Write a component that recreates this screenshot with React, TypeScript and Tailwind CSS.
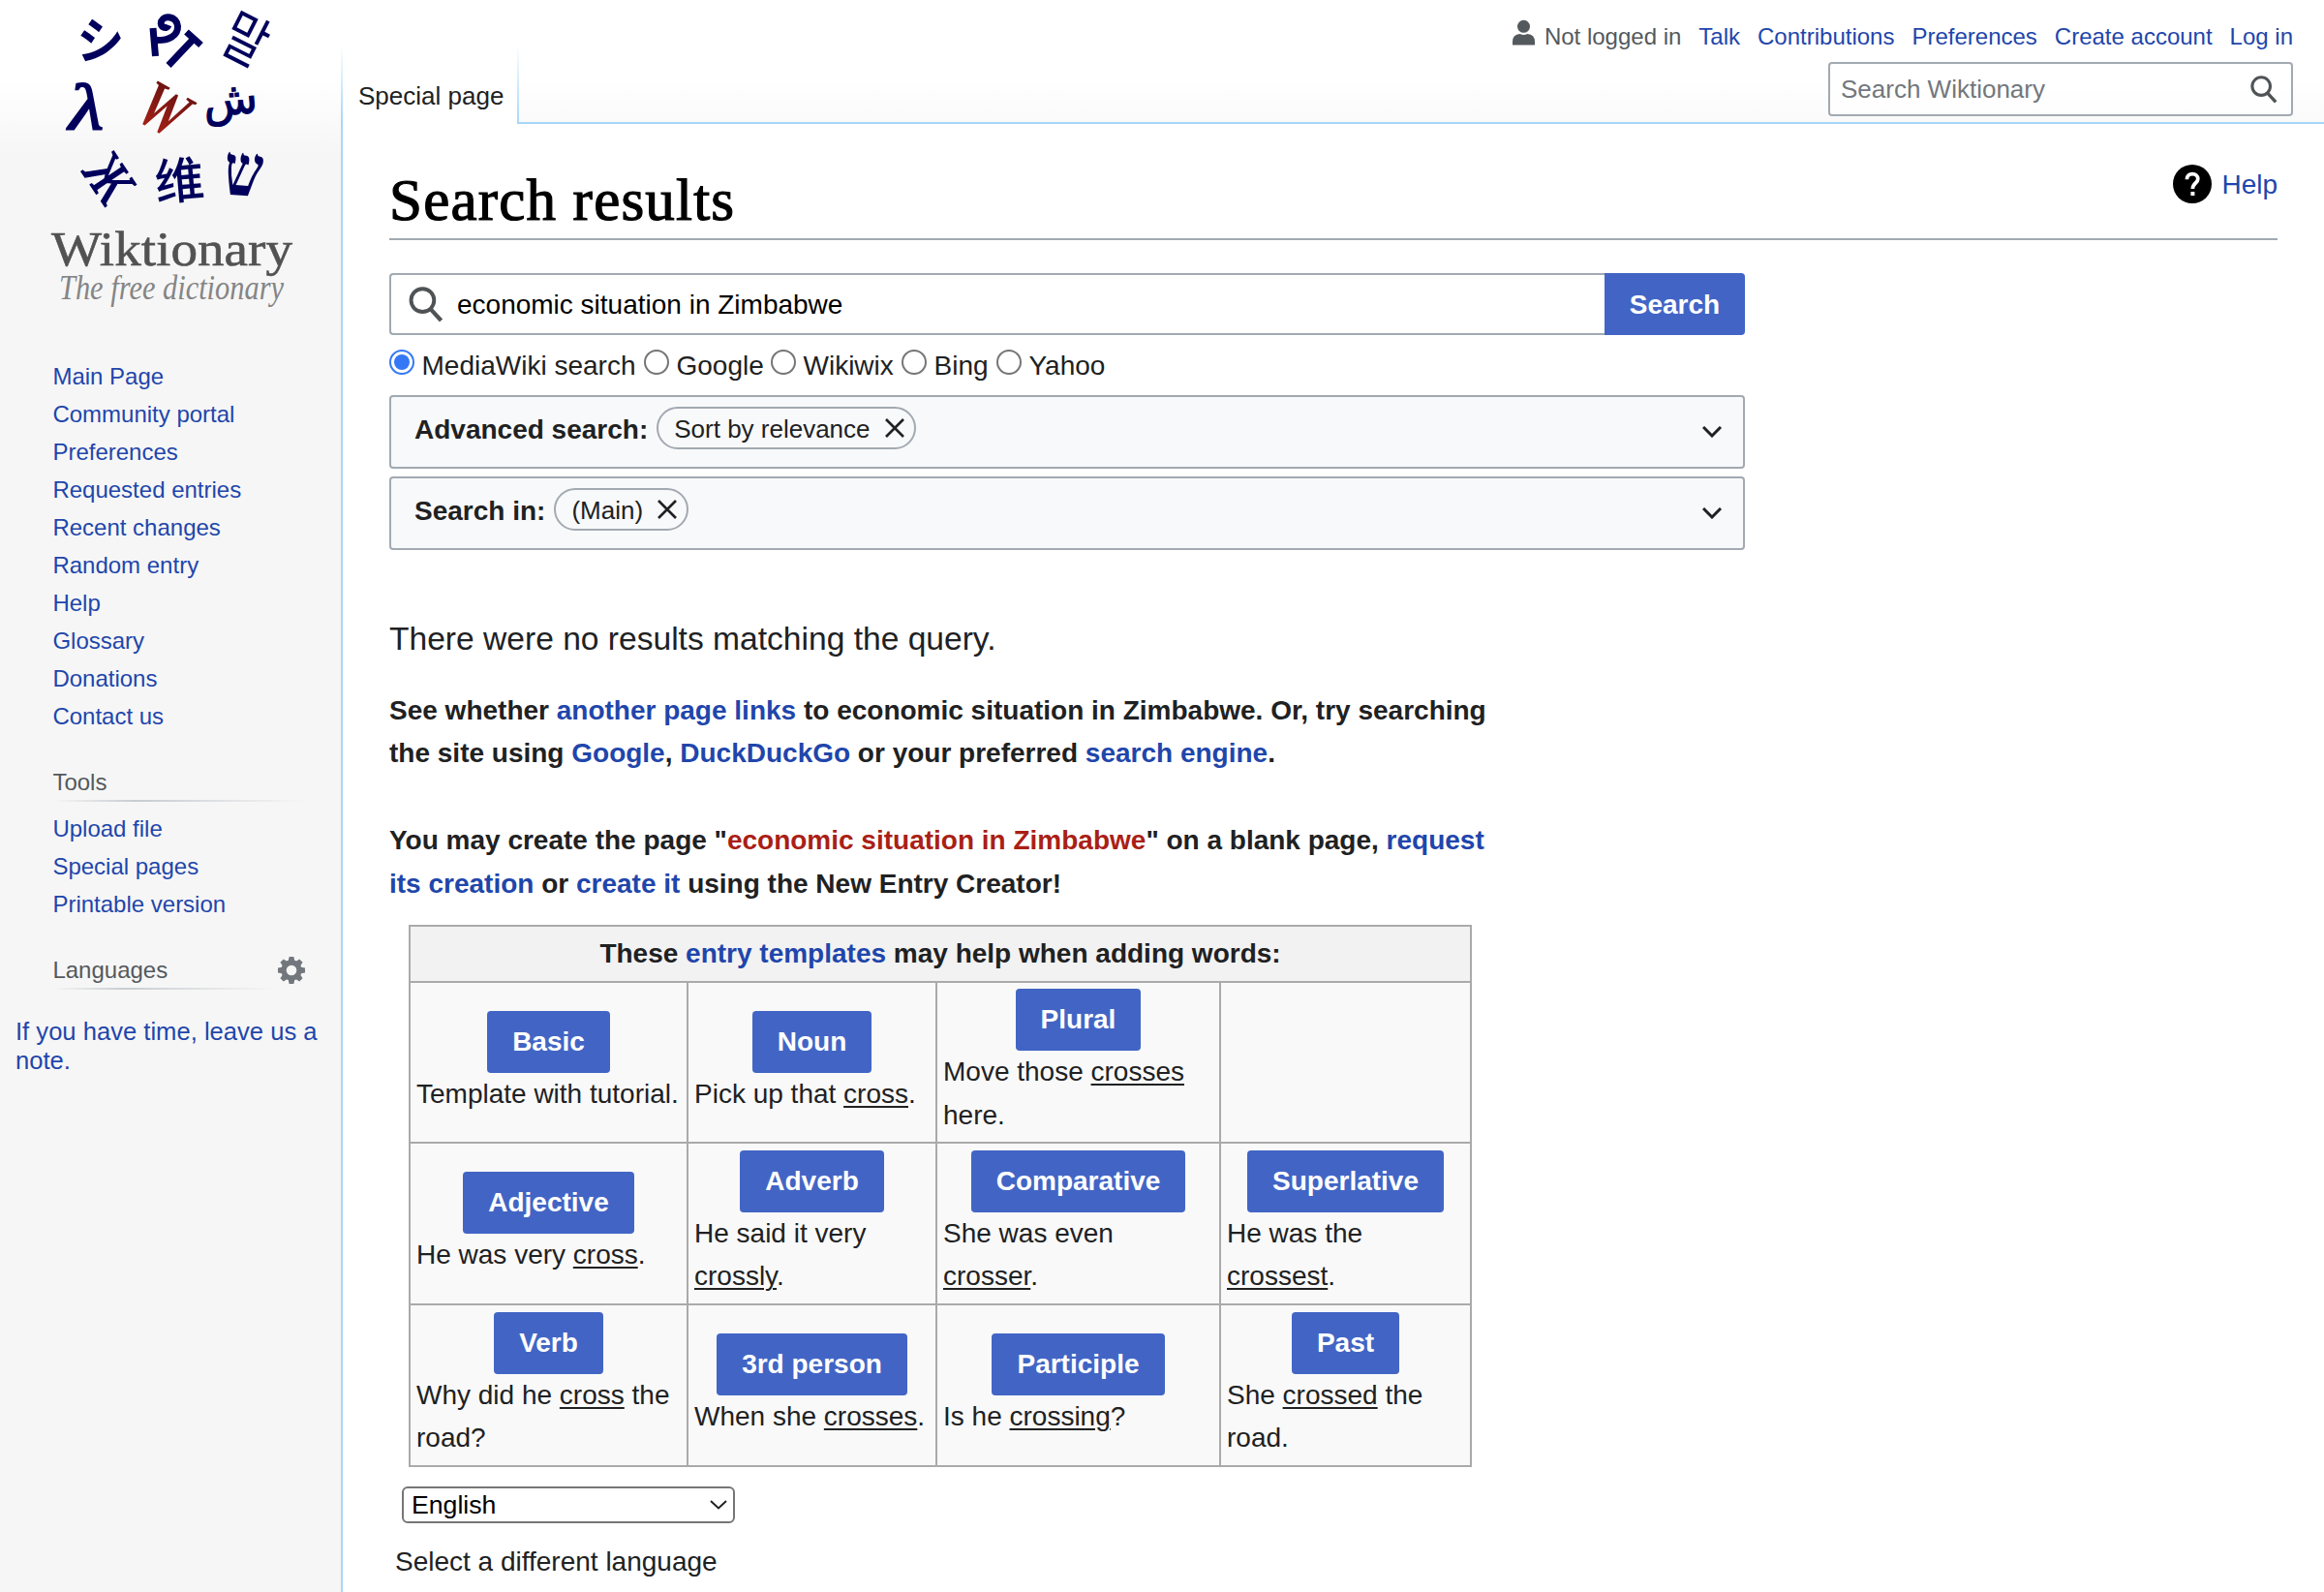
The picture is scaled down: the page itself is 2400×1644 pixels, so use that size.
import React from "react";

const navLinks = [
  "Main Page", "Community portal", "Preferences", "Requested entries", "Recent changes",
  "Random entry", "Help", "Glossary", "Donations", "Contact us",
];
const toolLinks = ["Upload file", "Special pages", "Printable version"];

type Cell = { title: string; before: string; word?: string; after?: string } | null;
const rows: Cell[][] = [
  [
    { title: "Basic", before: "Template with tutorial." },
    { title: "Noun", before: "Pick up that ", word: "cross", after: "." },
    { title: "Plural", before: "Move those ", word: "crosses", after: " here." },
    null,
  ],
  [
    { title: "Adjective", before: "He was very ", word: "cross", after: "." },
    { title: "Adverb", before: "He said it very ", word: "crossly", after: "." },
    { title: "Comparative", before: "She was even ", word: "crosser", after: "." },
    { title: "Superlative", before: "He was the ", word: "crossest", after: "." },
  ],
  [
    { title: "Verb", before: "Why did he ", word: "cross", after: " the road?" },
    { title: "3rd person", before: "When she ", word: "crosses", after: "." },
    { title: "Participle", before: "Is he ", word: "crossing", after: "?" },
    { title: "Past", before: "She ", word: "crossed", after: " the road." },
  ],
];

const A = ({ children }: { children: React.ReactNode }) => (
  <a href="#" className="text-[#1f46ab]">{children}</a>
);

function SearchIcon({ className }: { className: string }) {
  return (
    <svg viewBox="0 0 36 38" className={className} fill="none" stroke="#505355">
      <circle cx="14.3" cy="14.5" r="12.2" strokeWidth="4" />
      <path d="M22.5 23.5 L34 36" strokeWidth="4.4" />
    </svg>
  );
}

function Logo() {
  return (
    <svg viewBox="0 0 352 340" className="block h-[340px] w-[352px]">
      <defs>
        <linearGradient id="w" x1="0" y1="0" x2="0" y2="1">
          <stop offset="0" stopColor="#5c0f10" />
          <stop offset="1" stopColor="#b32418" />
        </linearGradient>
      </defs>
      <g fill="#00005c" textAnchor="middle">
        <text transform="translate(103 61) rotate(2) scale(1 1.06)" fontFamily="Noto Sans CJK JP" fontWeight="700" fontSize="49">シ</text>
        <g fill="none" stroke="#00005c" strokeWidth="7">
          <path d="M158 29 L160.500 58" />
          <path d="M161 41.500 C174 42 184 37 183.500 27 C182.500 16 169 15.500 166.500 22 C164.500 28 172 31 174 26" />
          <path d="M192.500 33 L207.500 46.500 M200 40 L174 67.500" />
        </g>
        <text transform="translate(244 60) rotate(27) scale(.88 1.1)" fontFamily="Noto Sans CJK KR" fontSize="54">말</text>
        <text transform="translate(89 134) scale(1.22 1)" fontFamily="Liberation Serif" fontStyle="italic" fontSize="68" stroke="#00005c" strokeWidth="1.8">λ</text>
        <text transform="translate(158 133) rotate(29) scale(.92 1.2)" fontFamily="Liberation Serif" fontStyle="italic" fontWeight="700" fontSize="58" fill="url(#w)">W</text>
        <text transform="translate(239 118) rotate(-5)" fontFamily="DejaVu Sans" fontSize="46" stroke="#00005c" strokeWidth="1.2">ش</text>
        <text transform="translate(113 184) rotate(56) scale(.82 1) translate(0 20)" fontFamily="Liberation Serif" fontSize="60" stroke="#00005c" strokeWidth="1.6">Ж</text>
        <text transform="translate(187 205) rotate(-5)" fontFamily="Noto Sans CJK SC" fontWeight="500" fontSize="51">维</text>
        <text transform="translate(250 202) rotate(4) scale(.88 1.17)" fontFamily="Liberation Serif" fontWeight="700" fontSize="64">ש</text>
      </g>
      <text x="53" y="274" fontFamily="Liberation Serif" fontSize="51" fill="#525252" stroke="#525252" strokeWidth=".6" textLength="249" lengthAdjust="spacingAndGlyphs">Wiktionary</text>
      <text x="61" y="309" fontFamily="Liberation Serif" fontStyle="italic" fontSize="36" fill="#858585" textLength="232" lengthAdjust="spacingAndGlyphs">The free dictionary</text>
    </svg>
  );
}

const Gear = () => (
  <svg viewBox="0 0 20 20" className="mt-px h-[28px] w-[28px]" fill="#72777d">
    <circle cx="10" cy="10" r="5.700" fill="none" stroke="#72777d" strokeWidth="3.800" />
    {[0, 45, 90, 135, 180, 225, 270, 315].map((a) => (
      <path key={a} d="M7.500 4 L8.300 0 H11.700 L12.500 4 Z" transform={`rotate(${a} 10 10)`} />
    ))}
  </svg>
);

function Heading({ children }: { children: React.ReactNode }) {
  return (
    <div>
      <h3 className="text-[24px] leading-[30px] text-[#54595d]">{children}</h3>
      <div className="mt-[3px] h-[2px] bg-linear-to-r from-[#c8ccd1]/0 via-[#c8ccd1] via-33% to-[#c8ccd1]/0" />
    </div>
  );
}

function Sidebar() {
  return (
    <aside className="w-[352px] shrink-0 text-[24px]">
      <Logo />
      <ul className="mt-[29px] ml-[54.4px] leading-[39px]">
        {navLinks.map((l) => <li key={l}><A>{l}</A></li>)}
      </ul>
      <div className="mt-[34px] ml-[54.4px] w-[261px]"><Heading>Tools</Heading></div>
      <ul className="mt-[8px] ml-[54.4px] leading-[39px]">
        {toolLinks.map((l) => <li key={l}><A>{l}</A></li>)}
      </ul>
      <div className="mt-[34px] ml-[54.4px] flex w-[260.6px] items-start justify-between">
        <div className="w-[228px]"><Heading>Languages</Heading></div>
        <Gear />
      </div>
      <p className="mt-[28px] ml-[16px] text-[25.6px] leading-[30px]">
        <A>If you have time, leave us a<br />note.</A>
      </p>
    </aside>
  );
}

function Header() {
  return (
    <header className="flex h-[126px] justify-between">
      <div className="flex pt-[46px]">
        <div className="w-[2px] bg-linear-to-b from-[#a7d7f9]/0 to-[#a7d7f9]" />
        <div className="w-[180px] bg-white pt-[37px] pl-[16px] text-[26px] leading-[32px] text-[#202122]">Special page</div>
        <div className="h-[82px] w-[2px] bg-linear-to-b from-[#a7d7f9]/0 to-[#a7d7f9]" />
      </div>
      <div className="mr-[32px] flex flex-col items-end">
        <div className="mt-[20px] flex h-[36px] gap-[18px] text-[24px] leading-[36px]">
          <span className="flex text-[#54595d]">
            <svg viewBox="0 0 24 28" className="mr-[10px] h-[27px] w-[23px]" fill="#54595d">
              <ellipse cx="12" cy="7.500" rx="6.800" ry="6.800" />
              <path d="M0 27.500 V24 Q0 16 8 15.500 Q12 17.500 16 15.500 Q24 16 24 24 V27.500 Z" />
            </svg>
            Not logged in
          </span>
          <A>Talk</A><A>Contributions</A><A>Preferences</A><A>Create account</A><A>Log in</A>
        </div>
        <div className="mt-[8px] flex h-[56px] w-[480px] items-center justify-between rounded-[4px] border-2 border-[#a2a9b1] bg-white/50 pr-[14px] pl-[11px] text-[26px] text-[#72777d]">
          <span>Search Wiktionary</span>
          <SearchIcon className="h-[29px] w-[28px]" />
        </div>
      </div>
    </header>
  );
}

const Radio = ({ on, label, className }: { on?: boolean; label: string; className: string }) => (
  <label className={`flex ${className}`}>
    {on ? (
      <span className="mt-[6px] flex h-[26px] w-[26px] items-center justify-center rounded-full border-2 border-[#3478f6] bg-white">
        <span className="h-[16px] w-[16px] rounded-full bg-[#3478f6]" />
      </span>
    ) : (
      <span className="mt-[6px] h-[26px] w-[26px] rounded-full border-2 border-[#767676] bg-white" />
    )}
    <span className="ml-[7.5px]">{label}</span>
  </label>
);

const Panel = ({ label, tag, className }: { label: string; tag: string; className: string }) => (
  <div className={`flex h-[76px] w-[1400px] justify-between rounded-[4px] border-2 border-[#a2a9b1] bg-[#f8f9fa] pt-[10px] pr-[22px] pl-[24px] ${className}`}>
    <div className="flex h-[44px] text-[28px] leading-[47px]">
      <b>{label}</b>
      <span className="ml-[9px] flex h-[44px] items-center rounded-full border-2 border-[#a2a9b1] pr-[10px] pl-[16px] text-[26px]">
        <span className="pt-[2px] leading-[40px]">{tag}</span>
        <svg viewBox="0 0 20 20" className="ml-[15px] h-[20px] w-[20px]" stroke="#202122" strokeWidth="2.600">
          <path d="M1 1 L19 19 M19 1 L1 19" />
        </svg>
      </span>
    </div>
    <svg viewBox="0 0 20 12" className="mt-[20px] h-[12px] w-[20px]" fill="none" stroke="#202122" strokeWidth="3">
      <path d="M1 1 L10 10 L19 1" />
    </svg>
  </div>
);

export default function App() {
  return (
    <div className="flex h-[1644px] w-[2400px] overflow-hidden bg-[linear-gradient(to_bottom,#ffffff_80px,#f6f6f6_160px)] font-['Liberation_Sans',sans-serif] text-[28px] leading-[44.8px] text-[#202122]">
      <Sidebar />
      <div className="flex flex-1 flex-col">
        <Header />
        <div className="flex flex-1">
          <div className="w-[2px] bg-[#a7d7f9]" />
          <div className="flex-1 bg-white">
            <div className="ml-[180px] h-[2px] bg-[#a7d7f9]" />
            <main className="mr-[48px] ml-[48px]">
              <div className="flex h-[120px] items-start justify-between border-b-2 border-[#a2a9b1]">
                <h1 className="mt-[43px] font-['Liberation_Serif',serif] text-[61px] leading-[72px] tracking-[1.2px] text-black [-webkit-text-stroke:1.2px_#000]">Search results</h1>
                <div className="mt-[42px] flex h-[40px] items-center text-[28px]">
                  <svg viewBox="0 0 20 20" className="mr-[10px] h-[40px] w-[40px]">
                    <circle cx="10" cy="10" r="10" fill="#000" />
                    <path d="M7.200 7.600 C7.200 3.900 12.900 3.900 12.900 7.400 C12.900 9.700 10.200 9.400 10.200 12.500" fill="none" stroke="#fff" strokeWidth="1.900" />
                    <rect x="9.200" y="14" width="2" height="2" fill="#fff" />
                  </svg>
                  <span className="pt-[2px]"><A>Help</A></span>
                </div>
              </div>

              <div className="mt-[34px] flex h-[64px] w-[1400px]">
                <div className="flex flex-1 items-center rounded-l-[4px] border-2 border-r-0 border-[#a2a9b1] bg-white pl-[18px] text-[28px] text-black">
                  <SearchIcon className="mr-[14px] h-[37px] w-[36px]" />
                  <span className="pt-[2px]">economic situation in Zimbabwe</span>
                </div>
                <button className="w-[145px] rounded-r-[4px] bg-[#4265c5] pt-[2px] text-[28px] font-bold text-white">Search</button>
              </div>

              <div className="mt-[9px] flex h-[46px] leading-[46px]">
                <Radio on label="MediaWiki search" className="w-[263px]" />
                <Radio label="Google" className="w-[131px]" />
                <Radio label="Wikiwix" className="w-[135px]" />
                <Radio label="Bing" className="w-[98px]" />
                <Radio label="Yahoo" className="" />
              </div>

              <Panel label="Advanced search:" tag="Sort by relevance" className="mt-[7px]" />
              <Panel label="Search in:" tag="(Main)" className="mt-[8px]" />

              <p className="mt-[65px] text-[33.6px] leading-[53px]">There were no results matching the query.</p>
              <p className="mt-[25.6px] font-bold">
                See whether <A>another page links</A> to economic situation in Zimbabwe. Or, try searching<br />
                the site using <A>Google</A>, <A>DuckDuckGo</A> or your preferred <A>search engine</A>.
              </p>
              <p className="mt-[45.2px] font-bold">
                You may create the page "<a href="#" className="text-[#aa1f16]">economic situation in Zimbabwe</a>" on a blank page, <A>request<br />
                its creation</A> or <A>create it</A> using the New Entry Creator!
              </p>

              <table className="mt-[19px] ml-[20px] w-[1097px] table-fixed border-collapse border-2 border-[#aaaaaa] bg-[#f9f9f9]">
                <colgroup>
                  <col className="w-[287px]" /><col className="w-[257px]" /><col className="w-[293px]" /><col className="w-[259px]" />
                </colgroup>
                <tbody>
                  <tr className="h-[58px]">
                    <th colSpan={4} className="border-2 border-[#aaaaaa] bg-[#f2f2f2] p-0 text-center font-bold">
                      These <A>entry templates</A> may help when adding words:
                    </th>
                  </tr>
                  {rows.map((r, i) => (
                    <tr key={i} className={i === 0 ? "h-[166px]" : "h-[167px]"}>
                      {r.map((c, j) => (
                        <td key={j} className="border-2 border-[#aaaaaa] px-[6px] pt-[2px] pb-0 align-middle">
                          {c && (
                            <>
                              <div className="flex justify-center">
                                <button className="h-[64px] rounded-[4px] bg-[#4265c5] px-[26px] pt-px font-bold text-white">{c.title}</button>
                              </div>
                              <div>
                                {c.before}
                                {c.word && <u className="underline decoration-2 underline-offset-[3px]">{c.word}</u>}
                                {c.after}
                              </div>
                            </>
                          )}
                        </td>
                      ))}
                    </tr>
                  ))}
                </tbody>
              </table>

              <div className="mt-[20px] ml-[13px] flex h-[38px] w-[344px] items-center justify-between rounded-[6px] border-2 border-[#767676] bg-white pr-[6px] pl-[8px] text-[26.667px] leading-[34px] text-black">
                <span>English</span>
                <svg viewBox="0 0 18 10" className="h-[10px] w-[18px]" fill="none" stroke="#202122" strokeWidth="2">
                  <path d="M1 1 L9 8.500 L17 1" />
                </svg>
              </div>
              <p className="mt-[18px] ml-[6px]">Select a different language</p>
            </main>
          </div>
        </div>
      </div>
    </div>
  );
}
